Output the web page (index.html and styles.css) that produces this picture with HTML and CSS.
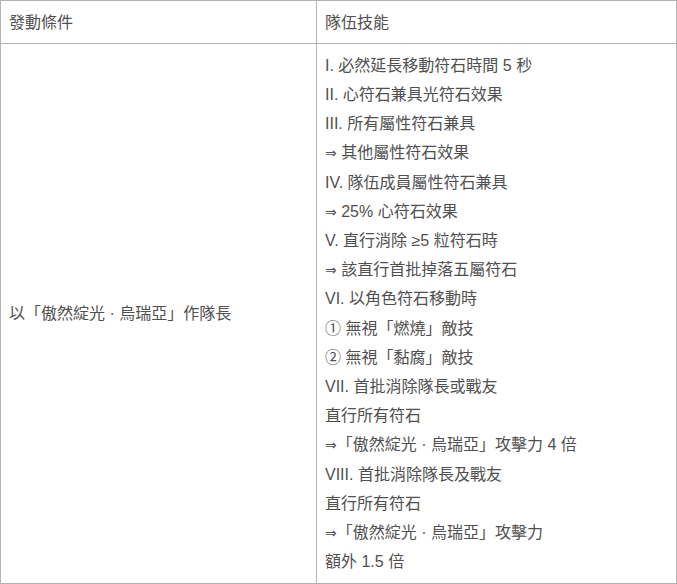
FILE: index.html
```html
<!DOCTYPE html>
<html lang="zh-Hant">
<head>
<meta charset="utf-8">
<link rel="stylesheet" href="styles.css">
</head>
<body>
<table class="skill-table">
  <thead>
    <tr>
      <th class="col-cond">發動條件</th>
      <th class="col-skill">隊伍技能</th>
    </tr>
  </thead>
  <tbody>
    <tr>
      <td class="cond">以「傲然綻光 · 烏瑞亞」作隊長</td>
      <td class="skill">
        I. 必然延長移動符石時間 5 秒<br>
        II. 心符石兼具光符石效果<br>
        III. 所有屬性符石兼具<br>
        <span class="arrow">⇒</span> 其他屬性符石效果<br>
        IV. 隊伍成員屬性符石兼具<br>
        <span class="arrow">⇒</span> 25% 心符石效果<br>
        V. 直行消除 ≥5 粒符石時<br>
        <span class="arrow">⇒</span> 該直行首批掉落五屬符石<br>
        VI. 以角色符石移動時<br>
        ① 無視「燃燒」敵技<br>
        ② 無視「黏腐」敵技<br>
        VII. 首批消除隊長或戰友<br>
        直行所有符石<br>
        <span class="arrow">⇒</span>「傲然綻光 · 烏瑞亞」攻擊力 4 倍<br>
        VIII. 首批消除隊長及戰友<br>
        直行所有符石<br>
        <span class="arrow">⇒</span>「傲然綻光 · 烏瑞亞」攻擊力<br>
        額外 1.5 倍
      </td>
    </tr>
  </tbody>
</table>
</body>
</html>
```
FILE: styles.css
```css
html, body {
  margin: 0;
  padding: 0;
  background: #ffffff;
}
body {
  font-family: "Liberation Sans", "Noto Sans CJK TC", sans-serif;
  font-size: 16px;
  color: #505050;
}
.skill-table {
  border-collapse: collapse;
  width: 677px;
  table-layout: fixed;
}
.skill-table th,
.skill-table td {
  border: 1px solid #b4b4b4;
  padding: 6.5px 8px;
  line-height: 29.2px;
  text-align: left;
  font-weight: normal;
}
.col-cond {
  width: 299px;
}
.cond {
  vertical-align: middle;
}
.skill {
  vertical-align: top;
}
.arrow {
  font-family: "DejaVu Sans", sans-serif;
  font-size: 14px;
  line-height: 0;
}
```
